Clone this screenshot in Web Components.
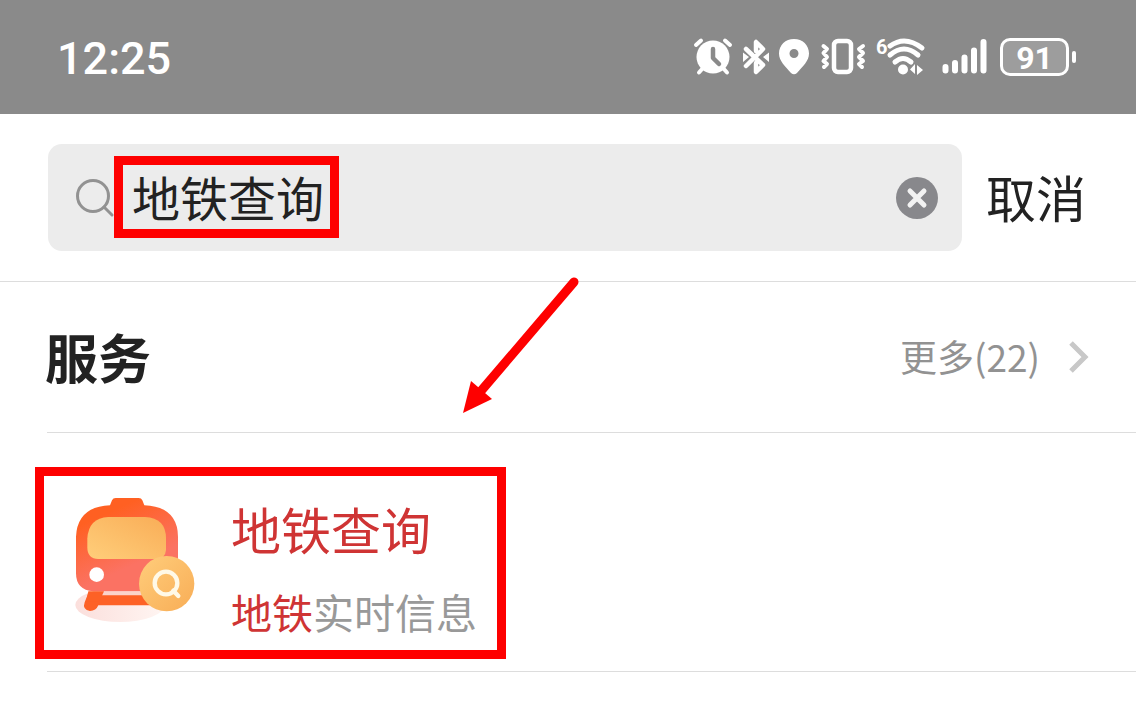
<!DOCTYPE html>
<html lang="zh-CN">
<head>
<meta charset="utf-8">
<meta name="viewport" content="width=device-width, initial-scale=1">
<title>地铁查询</title>
<style>
  body {
    margin: 0;
    background: #fff;
    color: #222;
    font-family: "Noto Sans CJK SC", sans-serif;
  }
</style>
</head>
<body>
<search-page></search-page>

<template id="status-bar">
  <style>
    :host { display: flex; align-items: center; justify-content: space-between; height: 114px; padding: 0 60px 0 57px; box-sizing: border-box; background: #8a8a8a; color: #fff; font-family: Roboto, "Noto Sans CJK SC", sans-serif; }
    time { padding-top: 4px; font-size: 45px; line-height: 60px; font-weight: 500; }
    .icons { display: flex; align-items: center; gap: 8px; }
    svg { display: block; height: 40px; fill: #fff; overflow: visible; }
    .line { fill: none; stroke: #fff; stroke-linecap: round; stroke-linejoin: round; }
    .battery { display: flex; align-items: center; gap: 3px; width: 76px; padding-left: 3px; }
    .level { flex: 1; box-sizing: border-box; height: 38px; border: 3px solid #fff; border-radius: 10px; background: #9d9d9d; font-size: 32px; line-height: 34px; font-weight: 700; text-align: center; }
    .nub { width: 4px; height: 12px; border-radius: 2px; background: #fff; }
    .icons svg:first-child { margin-left: 1px; }
  </style>
  <time>12:25</time>
  <div class="icons">
    <svg width="40" viewBox="0 0 40 40" aria-label="闹钟">
      <circle cx="20" cy="20" r="16.500"/>
      <path class="line" stroke-width="4" d="M3 8 8 3.500M37 8 32 3.500M10 31 6 35.500M30 31 34 35.500"/>
      <path d="M20 12V21L26 27" fill="none" stroke="#8a8a8a" stroke-width="4.500" stroke-linecap="round" stroke-linejoin="round"/>
    </svg>
    <svg width="30" viewBox="0 0 30 40" aria-label="蓝牙">
      <path class="line" stroke-width="4.500" d="M5 29 22 12 15 5V14M5 12 22 28 15 35V26"/>
      <path d="M2 15.500V25L8 20ZM28 15.500V25L22 20Z"/>
    </svg>
    <svg width="30" viewBox="0 0 30 40" aria-label="定位">
      <path fill-rule="evenodd" d="M15 2C6.500 2 0 8 0 16.500C0 24 6 29 12 36Q15 38.500 18 36C24 29 30 24 30 16.500C30 8 23.500 2 15 2ZM15 12A4.500 4.500 0 1 1 15 21A4.500 4.500 0 1 1 15 12Z"/>
    </svg>
    <svg width="50" viewBox="0 0 50 40" aria-label="振动">
      <rect class="line" stroke-width="4.500" x="17" y="4" width="17" height="31" rx="4"/>
      <path class="line" stroke-width="4" d="M6.500 9 10 12 6.500 16 10 20 6.500 24 10 27 7 30M46 9 42 12 46 16 42 20 46 24 42 27 45 30"/>
    </svg>
    <svg width="56" viewBox="0 0 56 40" aria-label="无线网络">
      <text x="1" y="17" font-size="20" font-weight="700">6</text>
      <path class="line" stroke-width="5" d="M15 9Q30 -2 47 11M15 18Q29 6 43 18M20 25Q28 18 36 25"/>
      <circle cx="28" cy="32.500" r="5"/>
      <path d="M40 27V37L35 32.500ZM42 28V38L48 33Z"/>
    </svg>
    <svg width="50" viewBox="0 0 50 40" aria-label="移动信号">
      <path class="line" stroke-width="6" d="M6.500 30V33.500M16 26V33.500M25.500 20.500V33.500M35 13.500V33.500M44.500 5V33.500"/>
    </svg>
    <div class="battery"><span class="level">91</span><span class="nub"></span></div>
  </div>
</template>

<template id="search-header">
  <style>
    :host { display: flex; align-items: center; gap: 24px; padding: 30px 50px 30px 48px; border-bottom: 1px solid #ddd; }
    .field { position: relative; flex: 1; min-width: 0; display: flex; align-items: center; gap: 17px; height: 107px; box-sizing: border-box; padding: 0 24px 0 28px; border-radius: 14px; background: #ececec; }
    svg { display: block; flex: none; }
    input { flex: 1; min-width: 0; height: 72px; padding: 0 0 4px; box-sizing: border-box; border: 0; outline: 0; background: none; font: inherit; font-size: 48px; color: #222; }
    button { padding: 0; border: 0; background: none; font: inherit; color: inherit; flex: none; }
    .cancel { padding-bottom: 4px; font-size: 50px; line-height: 72px; }
    highlight-box { position: absolute; left: 66px; top: 12px; width: 225px; height: 82px; }
  </style>
  <div class="field">
    <svg width="39" height="40" viewBox="0 0 39 40" fill="none" stroke="#929292" stroke-width="3" stroke-linecap="round" aria-hidden="true">
      <circle cx="17" cy="18" r="15.500"/><path d="M28 29 36 37"/>
    </svg>
    <input type="text" value="地铁查询" aria-label="搜索">
    <button type="button" aria-label="清除">
      <svg width="42" height="42" viewBox="0 0 42 42"><circle cx="21" cy="21" r="21" fill="#88888c"/><path d="M14 14 28 28M28 14 14 28" stroke="#f2f2f2" stroke-width="5" stroke-linecap="round"/></svg>
    </button>
    <highlight-box></highlight-box>
  </div>
  <button type="button" class="cancel">取消</button>
</template>

<template id="section-header">
  <style>
    :host { display: block; margin-left: 45px; }
    .row { display: flex; align-items: center; justify-content: space-between; height: 150px; padding-right: 47px; }
    hr { margin: 0 0 0 2px; border: 0; height: 1px; background: #ddd; }
    h2 { margin: 0; padding-bottom: 2px; font-size: 53px; line-height: 72px; font-weight: 700; }
    a { display: flex; align-items: center; gap: 29px; font-size: 37px; line-height: 60px; color: #929292; text-decoration: none; }
    .more { padding-bottom: 2px; }
    svg { display: block; }
  </style>
  <div class="row">
    <h2><slot></slot></h2>
    <a href="#more"><span class="more"><slot name="more"></slot></span>
      <svg width="20" height="34" viewBox="0 0 20 34" fill="none" stroke="#c8c8c8" stroke-width="5" aria-hidden="true"><path d="M2 3 16 17 2 31"/></svg>
    </a>
  </div>
  <hr>
</template>

<template id="service-result">
  <style>
    :host { display: block; position: relative; margin-left: 47px; border-bottom: 1px solid #ddd; }
    a { display: flex; gap: 35px; padding: 62px 26px 33px; color: #999; text-decoration: none; }
    h3 { margin: 0 0 24px; font-size: 50px; line-height: 66px; font-weight: 400; color: #cf3434; }
    p { margin: 0; font-size: 41px; line-height: 53px; }
    svg { display: block; flex: none; }
    highlight-box { position: absolute; left: -12px; top: 34px; width: 471px; height: 192px; }
  </style>
  <a href="#metro">
    <svg width="123" height="130" viewBox="129 105 369 390" aria-hidden="true">
      <defs>
        <linearGradient id="body" x1="0" y1="0" x2=".5" y2="1"><stop offset=".25" stop-color="#ff6022"/><stop offset=".8" stop-color="#fb7263"/></linearGradient>
        <linearGradient id="gold" x1="0" y1="1" x2="1" y2="0"><stop stop-color="#ffce7a"/><stop offset="1" stop-color="#f9ad57"/></linearGradient>
        <linearGradient id="badge" x1="0" y1="0" x2="1" y2="1"><stop stop-color="#ffcd7b"/><stop offset="1" stop-color="#f8ad56"/></linearGradient>
        <linearGradient id="shade" x1="0" y1="0" x2="1" y2="0"><stop stop-color="#fbdfdc"/><stop offset="1" stop-color="#fff5f2"/></linearGradient>
      </defs>
      <ellipse cx="270" cy="435" rx="134" ry="51" fill="url(#shade)"/>
      <path d="M180 405H370V436H205Q198 453 180 453Q156 449 164 427L174 402Z" fill="#fd6126"/>
      <path d="M215 395H350V406H215Z" fill="#fbd3ca"/>
      <path d="M240 136 246 121Q249 114 257 114H326Q334 114 337 121L343 136Q443 140 444 230V330Q444 394 380 394H190Q138 390 138 340V230Q142 140 240 136Z" fill="url(#body)"/>
      <path d="M175 394H222L208 425H168Z" fill="#fd6126"/>
      <path d="M235 171H345Q408 174 408 235V270Q406 297 378 297H205Q172 297 172 262V235Q176 174 235 171Z" fill="url(#gold)"/>
      <circle cx="200" cy="344" r="22" fill="#fff"/>
      <circle cx="410" cy="371" r="83" fill="url(#badge)"/>
      <g fill="none" stroke="#fff9e7" stroke-width="13" stroke-linecap="round"><circle cx="408" cy="369" r="34"/><path d="M430 392 445 408"/></g>
    </svg>
    <div><h3><slot name="title"></slot></h3><p><slot></slot></p></div>
  </a>
  <highlight-box></highlight-box>
</template>

<template id="highlight-box">
  <style>:host { display: block; box-sizing: border-box; border: 9px solid #fe0000; pointer-events: none; }</style>
</template>

<template id="pointer-arrow">
  <style>:host { display: block; pointer-events: none; } svg { display: block; }</style>
  <svg width="120" height="140" viewBox="0 0 120 140" aria-hidden="true">
    <path d="M114 6 21 115" stroke="#fe0000" stroke-width="9" stroke-linecap="round"/>
    <path d="M3 137 11 105 32 123Z" fill="#fe0000"/>
  </svg>
</template>

<template id="search-page">
  <style>
    :host { display: block; position: relative; }
    .hit { color: #cf3434; }
    pointer-arrow { position: absolute; left: 460px; top: 276px; }
  </style>
  <status-bar></status-bar>
  <search-header></search-header>
  <main>
    <section-header>服务<span slot="more">更多(22)</span></section-header>
    <service-result><span slot="title">地铁查询</span><span class="hit">地铁</span>实时信息</service-result>
  </main>
  <pointer-arrow></pointer-arrow>
</template>

<script>
  for (const name of ["highlight-box", "pointer-arrow", "status-bar", "search-header", "section-header", "service-result", "search-page"]) {
    customElements.define(name, class extends HTMLElement {
      constructor() {
        super();
        this.attachShadow({ mode: "open" }).append(document.getElementById(name).content.cloneNode(true));
      }
    });
  }
</script>
</body>
</html>
